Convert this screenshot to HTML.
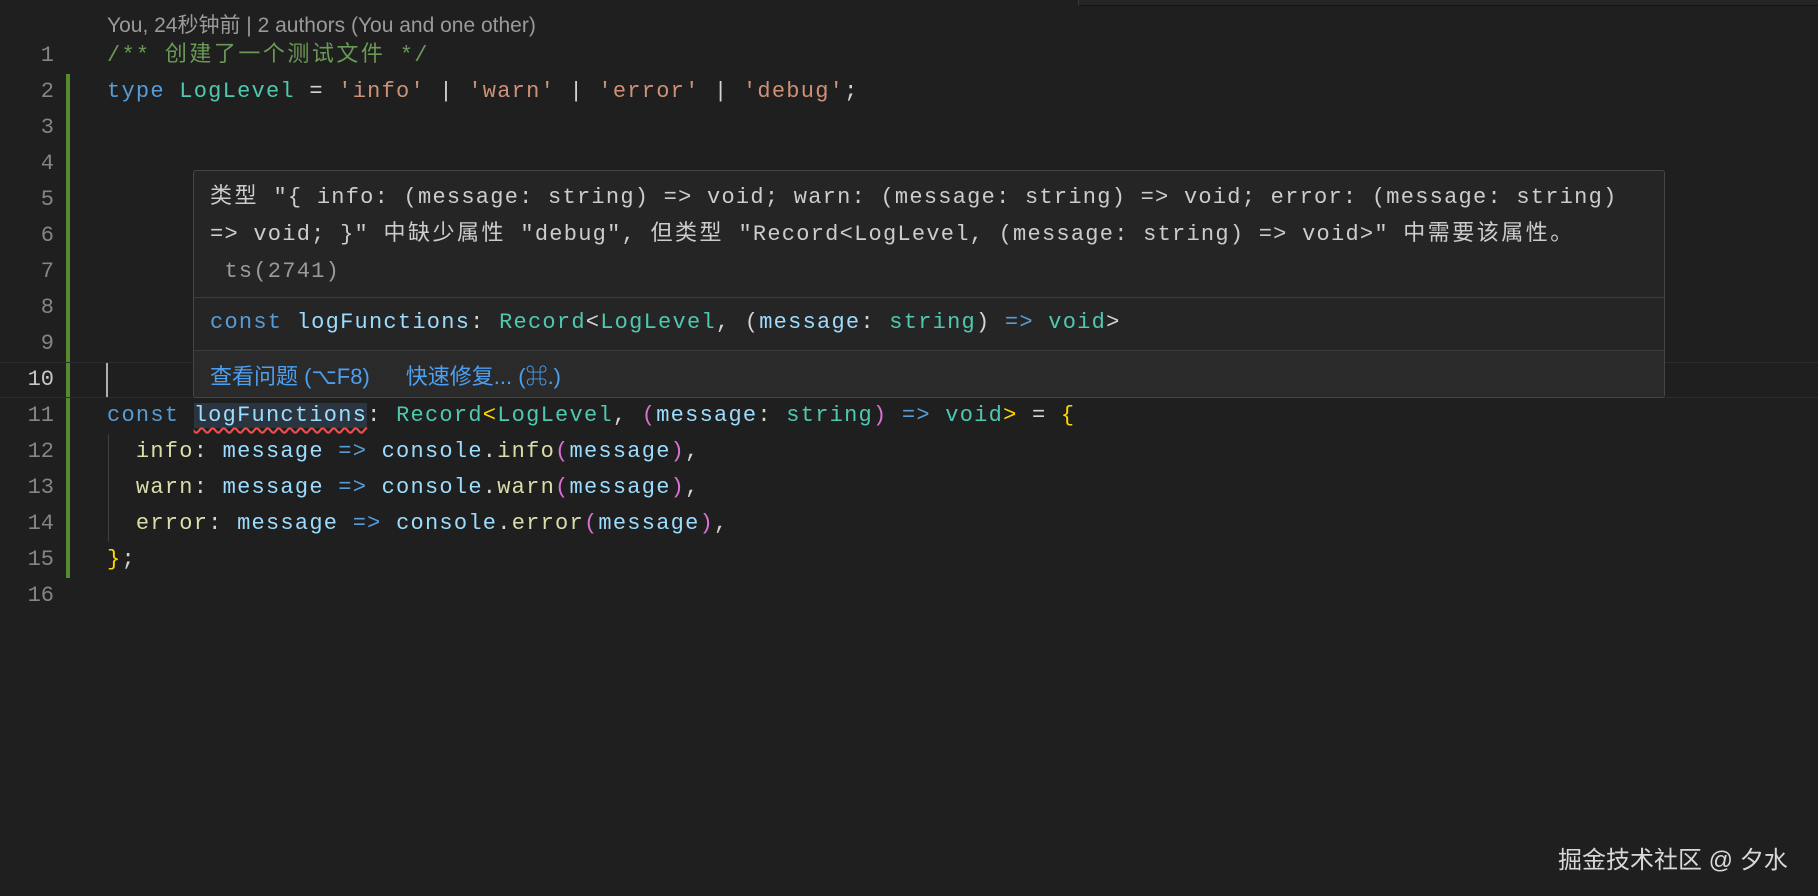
<!DOCTYPE html>
<html><head><meta charset="utf-8"><style>
html,body{margin:0;padding:0;width:1818px;height:896px;background:#1f1f1f;overflow:hidden;position:relative}
.m{font-family:"Liberation Mono","Noto Sans CJK SC",monospace;font-size:22px;letter-spacing:1.25px;white-space:pre}
.ln{position:absolute;left:0;width:54px;text-align:right;color:#858585;font-family:"Liberation Mono",monospace;font-size:22px;line-height:36px}
.cl{position:absolute;left:107px;line-height:36px;color:#d4d4d4}
.k{color:#569cd6}.t{color:#4ec9b0}.s{color:#ce9178}.c{color:#6a9955}.v{color:#9cdcfe}.f{color:#dcdcaa}.g{color:#ffd700}.p{color:#da70d6}
.cj{letter-spacing:2.5px}
</style></head><body>
<div style="position:absolute;left:1078px;top:0;width:740px;height:5px;background:#252526;border-bottom:1px solid #151515;border-left:1px solid #3a3a3a"></div>
<div style="position:absolute;left:107px;top:9px;font-family:'Liberation Sans','Noto Sans CJK SC',sans-serif;font-size:21px;color:#9a9a9a">You, 24秒钟前 | 2 authors (You and one other)</div>
<div style="position:absolute;left:66px;top:74px;width:4px;height:504px;background:#548b2d"></div>
<div style="position:absolute;left:0;top:362px;width:1818px;height:34px;border-top:1px solid #2c2c2c;border-bottom:1px solid #2c2c2c"></div>
<div style="position:absolute;left:106px;top:363px;width:2px;height:34px;background:#aeafad"></div>
<div style="position:absolute;left:108px;top:434px;width:1px;height:108px;background:#404040"></div>

<div class="ln" style="top:38px">1</div><div class="ln" style="top:74px">2</div><div class="ln" style="top:110px">3</div><div class="ln" style="top:146px">4</div><div class="ln" style="top:182px">5</div><div class="ln" style="top:218px">6</div><div class="ln" style="top:254px">7</div><div class="ln" style="top:290px">8</div><div class="ln" style="top:326px">9</div><div class="ln" style="top:362px;color:#c6c6c6">10</div><div class="ln" style="top:398px">11</div><div class="ln" style="top:434px">12</div><div class="ln" style="top:470px">13</div><div class="ln" style="top:506px">14</div><div class="ln" style="top:542px">15</div><div class="ln" style="top:578px">16</div>

<div class="cl m c" style="top:38px">/** <span class="cj">创建了一个测试文件</span> */</div>
<div class="cl m" style="top:74px"><span class="k">type</span> <span class="t">LogLevel</span> = <span class="s">'info'</span> | <span class="s">'warn'</span> | <span class="s">'error'</span> | <span class="s">'debug'</span>;</div>
<div class="cl m" style="top:398px"><span class="k">const</span> <span class="v" style="background:#2a3540;text-decoration:underline wavy #f14c4c;text-underline-offset:6px">logFunctions</span>: <span class="t">Record</span><span class="g">&lt;</span><span class="t">LogLevel</span>, <span class="p">(</span><span class="v">message</span>: <span class="t">string</span><span class="p">)</span> <span class="k">=&gt;</span> <span class="t">void</span><span class="g">&gt;</span> = <span class="g">{</span></div>
<div class="cl m" style="top:434px">  <span class="f">info</span>: <span class="v">message</span> <span class="k">=&gt;</span> <span class="v">console</span>.<span class="f">info</span><span class="p">(</span><span class="v">message</span><span class="p">)</span>,</div>
<div class="cl m" style="top:470px">  <span class="f">warn</span>: <span class="v">message</span> <span class="k">=&gt;</span> <span class="v">console</span>.<span class="f">warn</span><span class="p">(</span><span class="v">message</span><span class="p">)</span>,</div>
<div class="cl m" style="top:506px">  <span class="f">error</span>: <span class="v">message</span> <span class="k">=&gt;</span> <span class="v">console</span>.<span class="f">error</span><span class="p">(</span><span class="v">message</span><span class="p">)</span>,</div>
<div class="cl m" style="top:542px"><span class="g">}</span>;</div>

<div style="position:absolute;left:193px;top:170px;width:1470px;height:226px;background:#252526;border:1px solid #454545;border-radius:3px;overflow:hidden">
  <div class="m" style="position:absolute;left:16px;top:8px;line-height:37px;color:#cccccc"><span class="cj">类型</span> "{ info: (message: string) =&gt; void; warn: (message: string) =&gt; void; error: (message: string)
=&gt; void; }" <span class="cj">中缺少属性</span> "debug", <span class="cj">但类型</span> "Record&lt;LogLevel, (message: string) =&gt; void&gt;" <span class="cj">中需要该属性。</span>
 <span style="color:#9a9a9a">ts(2741)</span></div>
  <div style="position:absolute;left:0;top:126px;width:100%;height:1px;background:#3c3c3c"></div>
  <div class="m" style="position:absolute;left:16px;top:134px;line-height:36px;color:#d4d4d4"><span class="k">const</span> <span class="v">logFunctions</span>: <span class="t">Record</span>&lt;<span class="t">LogLevel</span>, (<span class="v">message</span>: <span class="t">string</span>) <span class="k">=&gt;</span> <span class="t">void</span>&gt;</div>
  <div style="position:absolute;left:0;top:179px;width:100%;height:47px;background:#2a2a2b;border-top:1px solid #3c3c3c"></div>
  <div style="position:absolute;left:16px;top:188px;font-family:'Liberation Sans','Noto Sans CJK SC',sans-serif;font-size:22px;color:#4d9ff0;white-space:pre">查看问题 (⌥F8)<span style="display:inline-block;width:36px"></span>快速修复... (⌘.)</div>
</div>

<div style="position:absolute;left:1558px;top:840px;font-family:'Liberation Sans','Noto Sans CJK SC',sans-serif;font-size:24px;color:#d8d8d8;white-space:pre">掘金技术社区 @ 夕水</div>
</body></html>
